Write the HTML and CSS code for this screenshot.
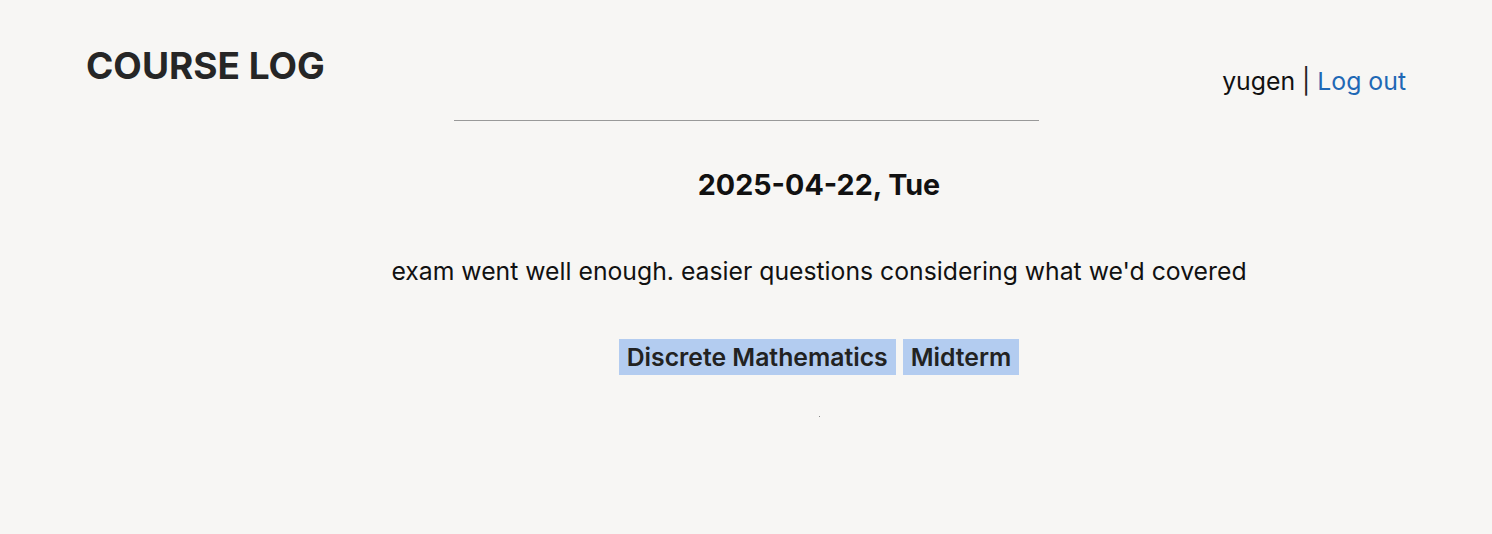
FILE: index.html
```html
<!DOCTYPE html>
<html>
<head>
<meta charset="utf-8">
<link rel="stylesheet" href="styles.css">
</head>
<body>
<header class="top">
  <h1 class="brand">COURSE LOG</h1>
  <div class="user">yugen <span class="sep">|</span> <a href="#" class="logout">Log out</a></div>
</header>
<hr class="rule">
<main class="main">
  <h2 class="date">2025-04-22, Tue</h2>
  <p class="entry">exam went well enough. easier questions considering what we'd covered</p>
  <div class="tags">
    <span class="tag">Discrete Mathematics</span>
    <span class="tag">Midterm</span>
  </div>
  <div class="dot"></div>
</main>
</body>
</html>
```
FILE: styles.css
```css
html, body {
  margin: 0;
  padding: 0;
  background: #f7f6f4;
  font-family: Inter, "Noto Sans", sans-serif;
  color: #111;
}
.top {
  display: flex;
  justify-content: space-between;
  align-items: flex-start;
  padding: 44px 86px 0 86px;
}
.brand {
  margin: 0;
  font-size: 37px;
  font-weight: 700;
  letter-spacing: 0;
  color: #262626;
  line-height: 44px;
}
.user {
  margin-top: 21px;
  font-size: 24.8px;
  line-height: 32px;
  color: #111;
}
.sep { color: #222; }
.logout {
  color: #1f68b5;
  text-decoration: none;
}
.rule {
  width: 585px;
  margin: 23px auto 0 auto;
  border: 0;
  border-top: 1px solid #999;
  height: 0;
}
.main {
  padding-left: 146px;
  display: flex;
  flex-direction: column;
  align-items: center;
}
.date {
  margin: 46px 0 0 0;
  font-size: 28.7px;
  font-weight: 700;
  line-height: 36px;
  color: #111;
}
.entry {
  margin: 52px 0 0 0;
  font-size: 24.75px;
  line-height: 32px;
}
.tags {
  display: flex;
  gap: 7px;
  margin-top: 52px;
}
.tag {
  background: #b3ccf0;
  color: #222;
  font-size: 24.75px;
  font-weight: 600;
  line-height: 36px;
  padding: 0 8px;
}
.dot {
  width: 1px;
  height: 1px;
  background: #888;
  margin-top: 41px;
}
```
